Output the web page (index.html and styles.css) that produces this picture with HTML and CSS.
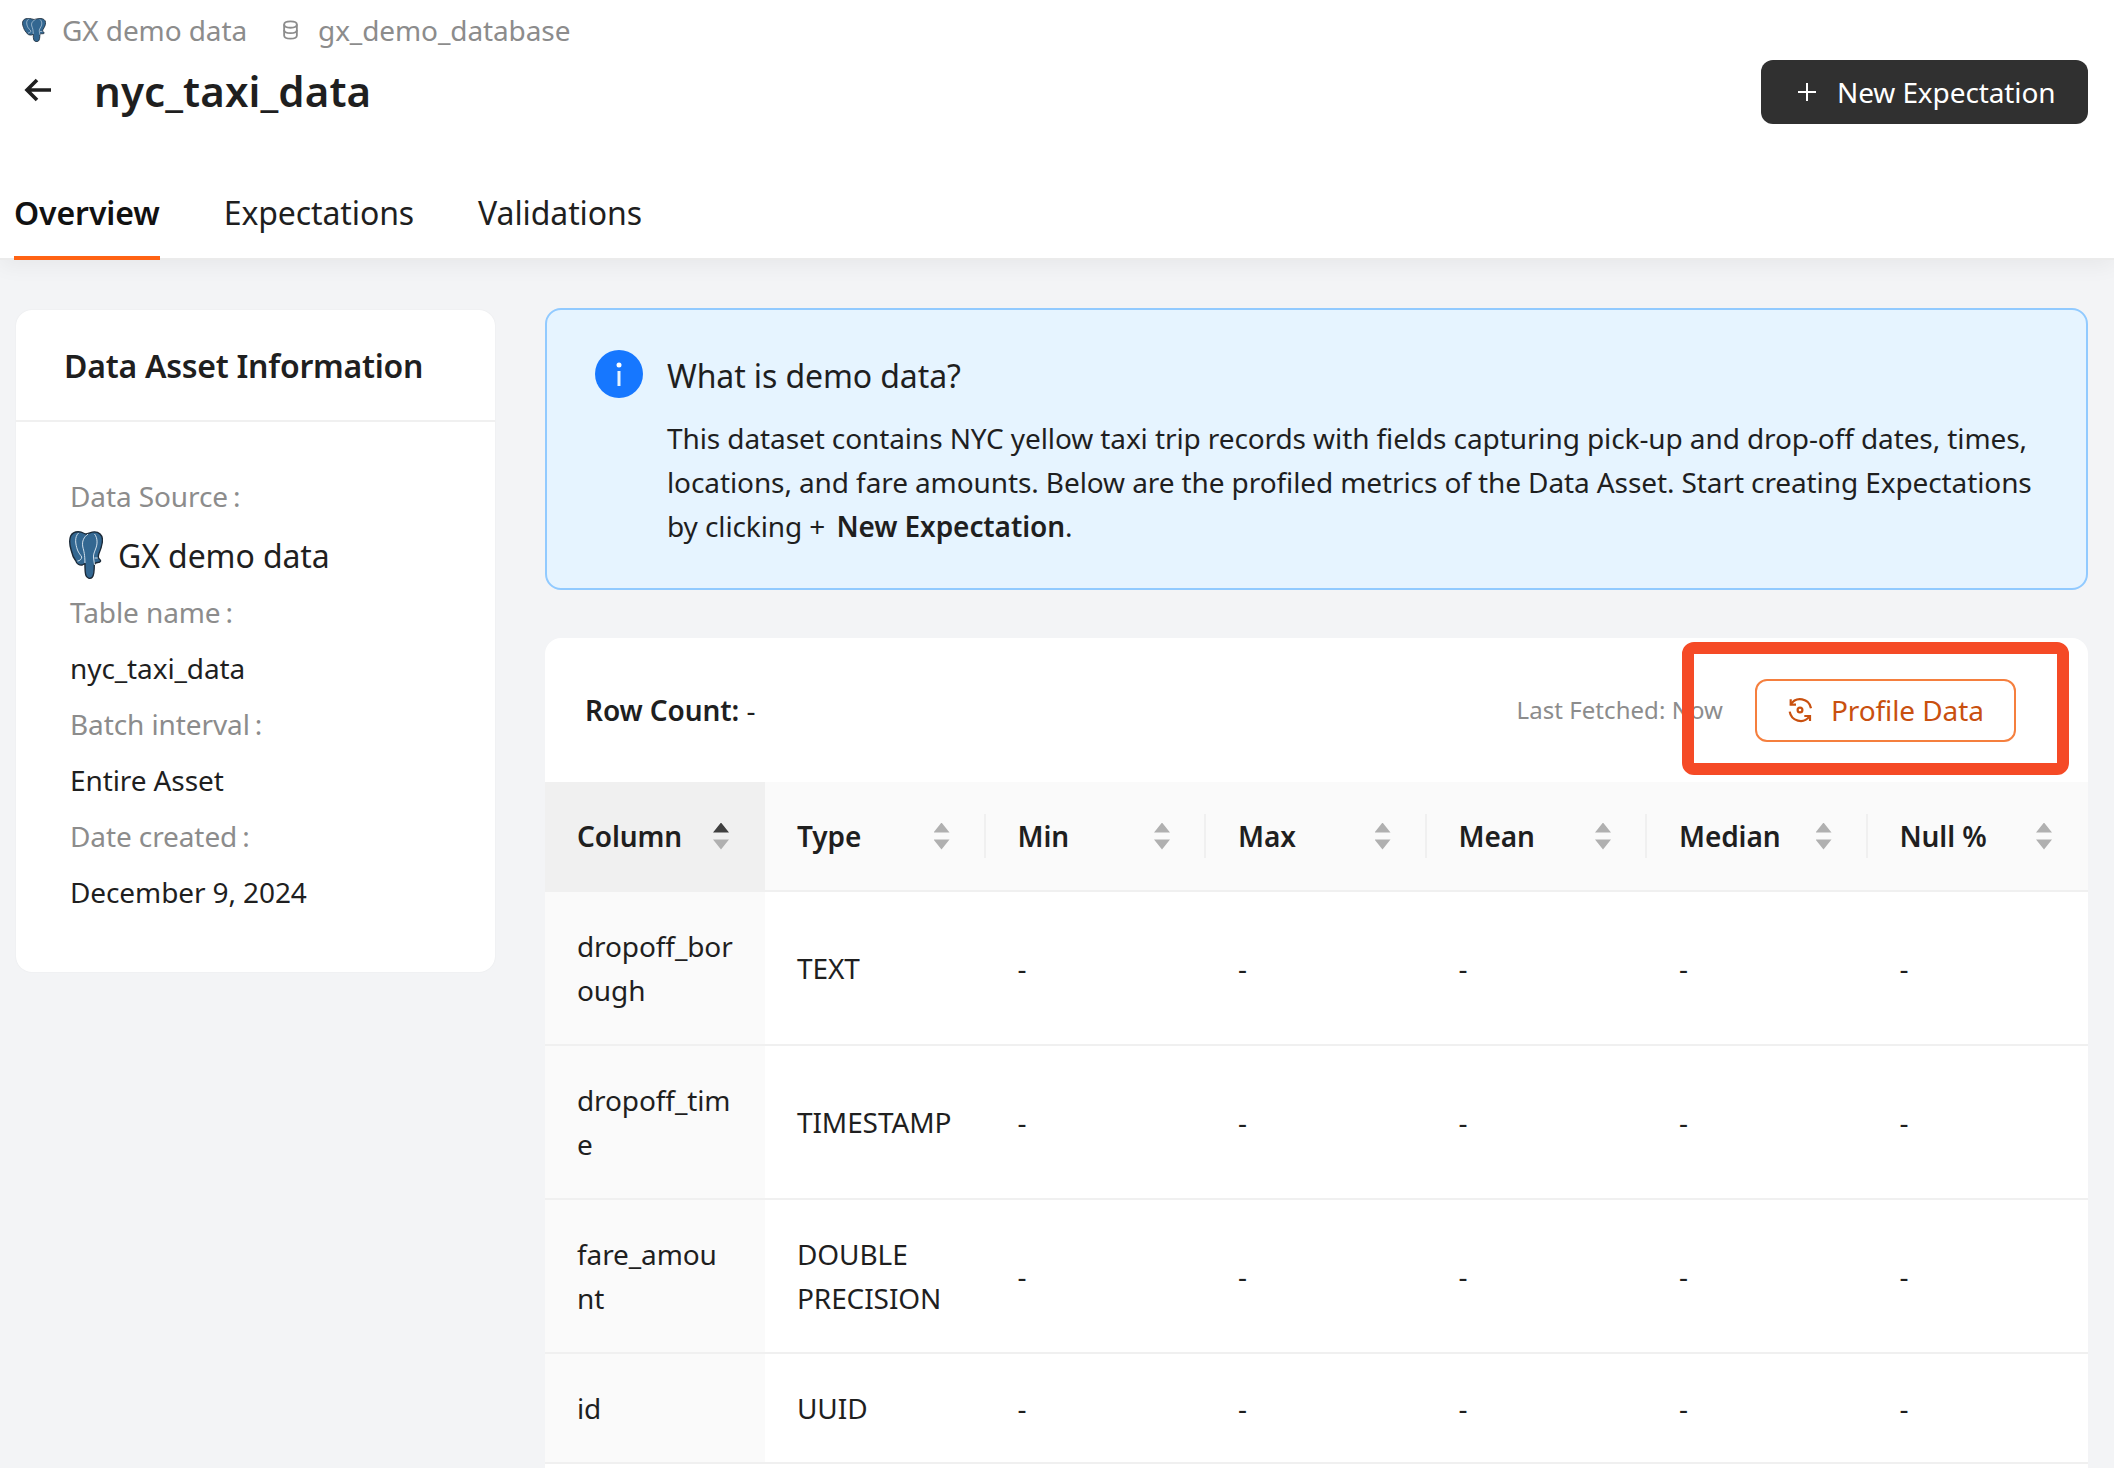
FILE: index.html
```html
<!DOCTYPE html>
<html lang="en">
<head>
  <meta charset="UTF-8">
  <meta name="viewport" content="width=device-width, initial-scale=1.0">
  <title>nyc_taxi_data</title>
  <link rel="stylesheet" href="styles.css">
</head>
<body>
  <svg class="defs" width="0" height="0">
    <symbol id="pg" viewBox="0 0 32 48" preserveAspectRatio="none">
      <path d="M10 .8C6 .4 3 2 1.600 5 0 9 .6 14 2 19c1 5 3 9 4.500 11 .5 3 3.500 4.500 6 4l2.500-1.500c0 4.500 0 8.500.8 11.500.7 3 4.200 4.500 6.200 2 1.500-2 1.800-8 1.800-12 .2-2 1.200-2.500 3.200-2.500 3 0 3.500-2 1.500-3.500-1.500-1-1-3-.5-5 2-5 3.500-9 3.500-14C31.500 4 28 .8 24 .8 21 .8 18.500 2.500 16 3 14 2.500 12 1 10 .8z" fill="#336791" stroke="#1c2a38" stroke-width="1.300" stroke-linejoin="round"/>
      <path d="M9 2C5 6 6 13 8 19c1 3 3 5 4 7 0 2-2 4-4 4M18 3c-4 3-6 7-5 13 1 4 2 8 2 16M24 3c3 4 3 10 1 15-1 3-2 5-2 8l1 8M24 27h3" fill="none" stroke="#dfe9f2" stroke-width=".9"/>
    </symbol>
  </svg>

  <header class="page-header">
    <div class="crumbs">
      <svg class="crumb-pg"><use href="#pg"/></svg>
      <span>GX demo data</span>
      <svg class="crumb-db" viewBox="0 0 18 22" fill="none" stroke="#8c8c8c" stroke-width="2">
        <path d="M2 5c0-2 3-3.500 7-3.500s7 1.500 7 3.500v12c0 2-3 3.500-7 3.500s-7-1.500-7-3.500z"/>
        <path d="M2 5c0 2 3 3.500 7 3.500s7-1.500 7-3.500M2 11c0 2 3 3.500 7 3.500s7-1.500 7-3.500"/>
      </svg>
      <span>gx_demo_database</span>
    </div>
    <div class="title-row">
      <svg class="back" viewBox="0 0 28 24" fill="none" stroke="#1f1f1f" stroke-width="3.600">
        <path d="M27 12H3M13 2 3 12l10 10"/>
      </svg>
      <h1>nyc_taxi_data</h1>
      <button class="new-btn">
        <svg viewBox="0 0 20 20" stroke="#fff" stroke-width="2"><path d="M10 1v18M1 10h18"/></svg>
        New Expectation
      </button>
    </div>
    <nav class="tabs">
      <a class="active" href="#">Overview</a>
      <a href="#">Expectations</a>
      <a href="#">Validations</a>
    </nav>
  </header>

  <main class="content">
    <aside class="info-card">
      <h2>Data Asset Information</h2>
      <div class="info-list">
        <div class="label">Data Source<i>:</i></div>
        <div class="source"><svg><use href="#pg"/></svg>GX demo data</div>
        <div class="label">Table name<i>:</i></div>
        <div class="value">nyc_taxi_data</div>
        <div class="label">Batch interval<i>:</i></div>
        <div class="value">Entire Asset</div>
        <div class="label">Date created<i>:</i></div>
        <div class="value">December 9, 2024</div>
      </div>
    </aside>

    <section class="main-col">
      <div class="alert">
        <svg class="alert-icon" viewBox="0 0 48 48">
          <circle cx="24" cy="24" r="24" fill="#1677ff"/>
          <circle cx="24" cy="15" r="2.500" fill="#fff"/>
          <rect x="22.500" y="21" width="3" height="15" fill="#e6f4ff"/>
        </svg>
        <div>
          <div class="alert-title">What is demo data?</div>
          <p>This dataset contains NYC yellow taxi trip records with fields capturing pick-up and drop-off dates, times, locations, and fare amounts. Below are the profiled metrics of the Data Asset. Start creating Expectations by clicking + <b>New Expectation</b>.</p>
        </div>
      </div>

      <div class="table-card">
        <div class="table-top">
          <div class="row-count"><b>Row Count:</b> -</div>
          <span class="fetched">Last Fetched: Now</span>
          <button class="profile-btn">
            <svg viewBox="0 0 26 26" fill="none" stroke="#c9500f" stroke-width="2.200">
              <path d="M3.700 7.700A11 11 0 0 1 24 11.300M2.700 14.700A11 11 0 0 0 22.300 19.700"/>
              <path d="M3.700 2.300v5.400H9M23 24v-5h-5.700"/>
              <circle cx="13" cy="13" r="2.400"/>
            </svg>
            Profile Data
          </button>
        </div>
        <table>
          <colgroup>
            <col class="col-first"><col><col><col><col><col><col>
          </colgroup>
          <thead>
            <tr>
              <th class="sorted"><div class="th-in">Column<span class="sorter up"></span></div></th>
              <th><div class="th-in">Type<span class="sorter"></span></div></th>
              <th><div class="th-in">Min<span class="sorter"></span></div></th>
              <th><div class="th-in">Max<span class="sorter"></span></div></th>
              <th><div class="th-in">Mean<span class="sorter"></span></div></th>
              <th><div class="th-in">Median<span class="sorter"></span></div></th>
              <th><div class="th-in">Null %<span class="sorter"></span></div></th>
            </tr>
          </thead>
          <tbody>
            <tr><td>dropoff_bor<wbr>ough</td><td>TEXT</td><td>-</td><td>-</td><td>-</td><td>-</td><td>-</td></tr>
            <tr><td>dropoff_tim<wbr>e</td><td>TIMESTAMP</td><td>-</td><td>-</td><td>-</td><td>-</td><td>-</td></tr>
            <tr><td>fare_amou<wbr>nt</td><td>DOUBLE PRECISION</td><td>-</td><td>-</td><td>-</td><td>-</td><td>-</td></tr>
            <tr><td>id</td><td>UUID</td><td>-</td><td>-</td><td>-</td><td>-</td><td>-</td></tr>
          </tbody>
        </table>
        <div class="annotation"></div>
      </div>
    </section>
  </main>
</body>
</html>
```
FILE: styles.css
```css
html, body {
  margin: 0;
  height: 1468px;
  overflow: hidden;
}
body {
  font-family: "Noto Sans", sans-serif;
  font-size: 28px;
  line-height: 44px;
  letter-spacing: -0.1px;
  color: #1f1f1f;
  background-color: #f3f4f6;
}
.defs {
  position: absolute;
}
.page-header {
  height: 260px;
  box-sizing: border-box;
  padding: 8px 26px 0 14px;
  background-color: white;
  border-bottom: 2px solid #ebebeb;
  box-shadow: 0 6px 20px rgba(0,0,0,0.05);
  position: relative;
}
.crumbs {
  display: flex;
  align-items: center;
  height: 44px;
  color: #8c8c8c;
  padding-left: 8px;
}
.crumb-pg {
  width: 24px;
  height: 24px;
  margin-right: 16px;
}
.crumb-db {
  width: 17px;
  height: 20px;
  margin: 0 19px 0 35px;
}
.title-row {
  display: flex;
  align-items: center;
  height: 64px;
  margin-top: 8px;
}
.back {
  width: 28px;
  height: 24px;
  margin-left: 10px;
  margin-right: 42px;
  position: relative;
  top: -2px;
}
h1 {
  margin: 0 0 2px;
  font-size: 42px;
  font-weight: 600;
  line-height: 52px;
  letter-spacing: 0.1px;
  flex: 1;
}
.new-btn {
  display: flex;
  align-items: center;
  gap: 20px;
  height: 64px;
  width: 327px;
  padding: 0 0 0 36px;
  font: inherit;
  letter-spacing: inherit;
  color: white;
  background-color: #303030;
  border: none;
  border-radius: 12px;
}
.new-btn svg {
  width: 20px;
  height: 20px;
}
.tabs {
  display: flex;
  gap: 64px;
  margin-top: 40px;
}
.tabs a {
  height: 96px;
  line-height: 98px;
  font-size: 32px;
  color: #1f1f1f;
  text-decoration: none;
  box-sizing: border-box;
}
.tabs a.active {
  font-weight: 600;
  color: #111;
  border-bottom: 4px solid #ff6314;
}
.content {
  display: flex;
  align-items: flex-start;
  gap: 50px;
  padding: 48px 26px 0 16px;
}
.info-card {
  width: 479px;
  flex: none;
  height: 662px;
  margin-top: 2px;
  box-sizing: border-box;
  background-color: white;
  border-radius: 16px;
  box-shadow: 0 0 2px rgba(0,0,0,0.06);
}
.info-card h2 {
  margin: 0;
  height: 112px;
  padding: 34px 0 0 48px;
  box-sizing: border-box;
  font-size: 32px;
  font-weight: 600;
  line-height: 44px;
  letter-spacing: -0.25px;
  border-bottom: 2px solid #f0f0f0;
}
.info-list {
  padding: 46px 0 0 54px;
}
.info-list > div {
  height: 56px;
  line-height: 56px;
}
.label {
  color: #8c8c8c;
}
.label i {
  font-style: normal;
  margin-left: 5px;
}
.info-list > .source {
  display: flex;
  align-items: center;
  font-size: 32px;
  height: 57px;
  margin-top: 3px;
}
.source svg {
  width: 34px;
  height: 48px;
  margin: 0 15px 2px -1px;
}
.main-col {
  flex: 1;
  min-width: 0;
}
.alert {
  display: flex;
  gap: 24px;
  height: 282px;
  box-sizing: border-box;
  padding: 40px 30px 0 48px;
  background-color: #e6f4ff;
  border: 2px solid #91caff;
  border-radius: 16px;
}
.alert-icon {
  width: 48px;
  height: 48px;
  flex: none;
}
.alert-title {
  font-size: 32px;
  line-height: 48px;
  margin-bottom: 16px;
  margin-top: 2px;
}
.alert p {
  margin: 0;
}
.alert b {
  font-weight: 600;
  margin-left: 4px;
}
.table-card {
  position: relative;
  margin-top: 48px;
  background-color: white;
  border-radius: 16px 16px 0 0;
  padding-bottom: 40px;
}
.table-top {
  display: flex;
  align-items: center;
  height: 144px;
  padding: 0 72px 0 40px;
}
.row-count {
  flex: 1;
}
.row-count b {
  font-weight: 600;
}
.fetched {
  font-size: 24px;
  letter-spacing: 0.05px;
  color: #8c8c8c;
  margin-right: 32px;
}
.profile-btn {
  display: flex;
  align-items: center;
  gap: 18px;
  width: 261px;
  height: 63px;
  padding: 0 0 0 30px;
  font: inherit;
  letter-spacing: inherit;
  color: #c9500f;
  background-color: white;
  border: 2px solid #f57f3e;
  border-radius: 12px;
}
.profile-btn svg {
  width: 26px;
  height: 26px;
}
table {
  width: 100%;
  table-layout: fixed;
  border-collapse: collapse;
}
.col-first {
  width: 220px;
}
th {
  height: 108px;
  padding: 0;
  font-weight: 600;
  text-align: left;
  background-color: #fafafa;
  border-bottom: 2px solid #f0f0f0;
}
th.sorted {
  background-color: #f0f0f0;
}
.th-in {
  display: flex;
  align-items: center;
  justify-content: space-between;
  height: 44px;
  padding: 0 36px 0 32px;
  border-left: 2px solid #f0f0f0;
  margin-left: -2px;
}
th:first-child .th-in, th:nth-child(2) .th-in {
  border-left: none;
  margin-left: 0;
}
.sorter {
  width: 16px;
  height: 27px;
  flex: none;
  background-color: #b0b0b0;
  clip-path: polygon(50% 0, 100% 37%, 0 37%, 0 63%, 100% 63%, 50% 100%, 0 63%, 0 37%);
}
.sorter.up {
  background: linear-gradient(#404040 50%, #b0b0b0 50%);
}
td {
  padding: 32px;
  border-bottom: 2px solid #f0f0f0;
}
td:first-child {
  padding-right: 28px;
  background-color: #fafafa;
}
.annotation {
  position: absolute;
  left: 1137px;
  top: 4px;
  width: 387px;
  height: 133px;
  box-sizing: border-box;
  border: 12px solid #f54a26;
  border-radius: 12px;
}
```
